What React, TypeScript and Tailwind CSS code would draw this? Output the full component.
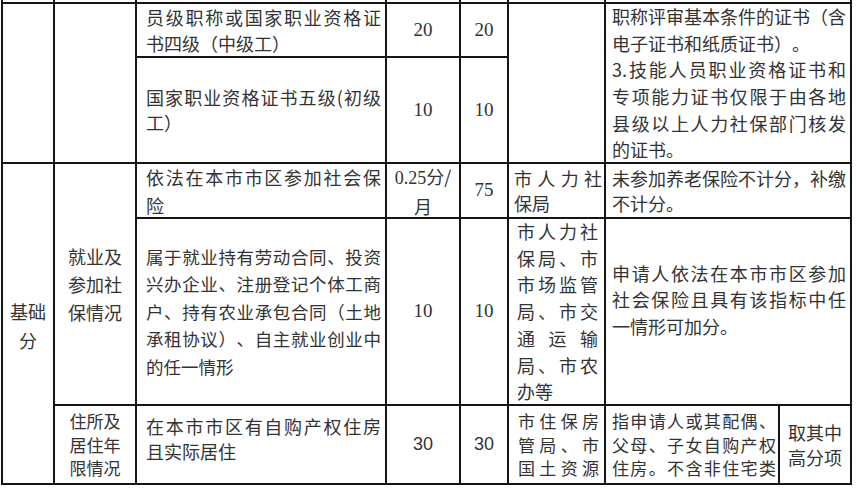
import React from "react"

const B = "border-r-2 border-b-2 border-[#161616]"
const C = `flex items-center ${B}`

// one justified line (spread to the cell width) or a plain last line
function J({ children }: { children: React.ReactNode }) {
  return <span className="block whitespace-nowrap text-justify [text-align-last:justify]">{children}</span>
}
function P({ children }: { children: React.ReactNode }) {
  return <span className="block whitespace-nowrap">{children}</span>
}

export default function App() {
  return (
    <div className="w-[856px] h-[489px] bg-white overflow-hidden text-[#333] [text-spacing-trim:space-all] font-['Noto_Sans_CJK_SC','Noto_Sans',sans-serif]">
      <div className="ml-[1px] grid grid-cols-[52px_82px_250px_74px_48px_97px_174px_72px] grid-rows-[4px_54px_106px_55px_187px_79px] border-l-2 border-[#161616]">
        {/* sliver of the row above */}
        <div className={`col-start-1 row-start-1 ${B}`} />
        <div className={`col-start-2 row-start-1 ${B}`} />
        <div className={`col-start-3 row-start-1 ${B}`} />
        <div className={`col-start-4 row-start-1 ${B}`} />
        <div className={`col-start-5 row-start-1 ${B}`} />
        <div className={`col-start-6 row-start-1 ${B}`} />
        <div className={`col-start-7 row-start-1 col-span-2 ${B}`} />

        {/* certificates */}
        <div className={`col-start-1 row-start-2 row-span-2 ${B}`} />
        <div className={`col-start-2 row-start-2 row-span-2 ${B}`} />
        <div className={`${C} col-start-3 row-start-2 pl-[9px] pr-[4px] text-[18px] leading-[26px]`}>
          <div className="w-full">
            <J>员级职称或国家职业资格证</J>
            <P>书四级（中级工）</P>
          </div>
        </div>
        <div className={`${C} col-start-4 row-start-2 justify-center font-['Liberation_Serif',serif] text-[19px]`}>20</div>
        <div className={`${C} col-start-5 row-start-2 justify-center font-['Liberation_Serif',serif] text-[19px]`}>20</div>
        <div className={`${C} col-start-3 row-start-3 pl-[9px] pr-[4px] text-[18px] leading-[25px]`}>
          <div className="w-full">
            <J>国家职业资格证书五级(初级</J>
            <P>工）</P>
          </div>
        </div>
        <div className={`${C} col-start-4 row-start-3 justify-center font-['Liberation_Serif',serif] text-[19px]`}>10</div>
        <div className={`${C} col-start-5 row-start-3 justify-center font-['Liberation_Serif',serif] text-[19px]`}>10</div>
        <div className={`col-start-6 row-start-2 row-span-2 ${B}`} />
        <div className={`${C} col-start-7 col-span-2 row-start-2 row-span-2 pl-[6px] pr-[4px] text-[18px] leading-[26.6px]`}>
          <div className="w-full">
            <J>职称评审基本条件的证书（含</J>
            <P>电子证书和纸质证书）。</P>
            <J>3.技能人员职业资格证书和</J>
            <J>专项能力证书仅限于由各地</J>
            <J>县级以上人力社保部门核发</J>
            <P>的证书。</P>
          </div>
        </div>

        {/* 基础分 */}
        <div className={`${C} col-start-1 row-start-4 row-span-3 justify-center text-center text-[18px] leading-[29px] pt-[4px]`}>
          <div>
            <P>基础</P>
            <P>分</P>
          </div>
        </div>
        <div className={`${C} col-start-2 row-start-4 row-span-2 justify-center text-center text-[18px] leading-[28px]`}>
          <div>
            <P>就业及</P>
            <P>参加社</P>
            <P>保情况</P>
          </div>
        </div>

        <div className={`${C} col-start-3 row-start-4 pl-[9px] pr-[4px] text-[18px] leading-[28px]`}>
          <div className="w-full">
            <J>依法在本市市区参加社会保</J>
            <P>险</P>
          </div>
        </div>
        <div className={`${C} col-start-4 row-start-4 justify-center text-center text-[18px] leading-[28px]`}>
          <div>
            <P>
              <span className="font-['Liberation_Serif',serif]">0.25</span>分/
            </P>
            <P>月</P>
          </div>
        </div>
        <div className={`${C} col-start-5 row-start-4 justify-center font-['Liberation_Serif',serif] text-[19px]`}>75</div>
        <div className={`${C} col-start-6 row-start-4 pl-[5px] pr-[2px] text-[18px] leading-[25px]`}>
          <div className="w-full">
            <J>市 人 力 社</J>
            <P>保局</P>
          </div>
        </div>
        <div className={`${C} col-start-7 col-span-2 row-start-4 pl-[6px] pr-[4px] text-[18px] leading-[25px]`}>
          <div className="w-full">
            <J>未参加养老保险不计分，补缴</J>
            <P>不计分。</P>
          </div>
        </div>

        <div className={`${C} col-start-3 row-start-5 pl-[9px] pr-[4px] text-[17.5px] leading-[27.5px]`}>
          <div className="w-full">
            <J>属于就业持有劳动合同、投资</J>
            <J>兴办企业、注册登记个体工商</J>
            <J>户、持有农业承包合同（土地</J>
            <J>承租协议）、自主就业创业中</J>
            <P>的任一情形</P>
          </div>
        </div>
        <div className={`${C} col-start-4 row-start-5 justify-center font-['Liberation_Serif',serif] text-[19px]`}>10</div>
        <div className={`${C} col-start-5 row-start-5 justify-center font-['Liberation_Serif',serif] text-[19px]`}>10</div>
        <div className={`${C} col-start-6 row-start-5 pl-[8px] pr-[6px] text-[18px] leading-[26.7px]`}>
          <div className="w-full">
            <J>市人力社</J>
            <J>保局、市</J>
            <J>市场监管</J>
            <J>局、市交</J>
            <J>通 运 输</J>
            <J>局、市农</J>
            <P>办等</P>
          </div>
        </div>
        <div className={`${C} col-start-7 col-span-2 row-start-5 pl-[6px] pr-[4px] pb-[24px] text-[18px] leading-[26.5px]`}>
          <div className="w-full">
            <J>申请人依法在本市市区参加</J>
            <J>社会保险且具有该指标中任</J>
            <P>一情形可加分。</P>
          </div>
        </div>

        {/* 住所 */}
        <div className={`${C} col-start-2 row-start-6 justify-center text-center text-[17px] leading-[23.5px]`}>
          <div>
            <P>住所及</P>
            <P>居住年</P>
            <P>限情况</P>
          </div>
        </div>
        <div className={`${C} col-start-3 row-start-6 pl-[9px] pr-[4px] pb-[12px] text-[18px] leading-[25px]`}>
          <div className="w-full">
            <J>在本市市区有自购产权住房</J>
            <P>且实际居住</P>
          </div>
        </div>
        <div className={`${C} col-start-4 row-start-6 justify-center font-['Liberation_Sans',sans-serif] text-[18px]`}>30</div>
        <div className={`${C} col-start-5 row-start-6 justify-center font-['Liberation_Sans',sans-serif] text-[18px]`}>30</div>
        <div className={`${C} col-start-6 row-start-6 pl-[9px] pr-[5px] text-[17px] leading-[23.5px]`}>
          <div className="w-full">
            <J>市住保房</J>
            <J>管局、市</J>
            <J>国土资源</J>
          </div>
        </div>
        <div className={`${C} col-start-7 row-start-6 pl-[6px] pr-[2px] text-[17px] leading-[23.5px]`}>
          <div className="w-full">
            <J>指申请人或其配偶、</J>
            <J>父母、子女自购产权</J>
            <J>住房。不含非住宅类</J>
          </div>
        </div>
        <div className={`${C} col-start-8 row-start-6 justify-center text-center text-[18px] leading-[25px]`}>
          <div>
            <P>取其中</P>
            <P>高分项</P>
          </div>
        </div>
      </div>
    </div>
  )
}
